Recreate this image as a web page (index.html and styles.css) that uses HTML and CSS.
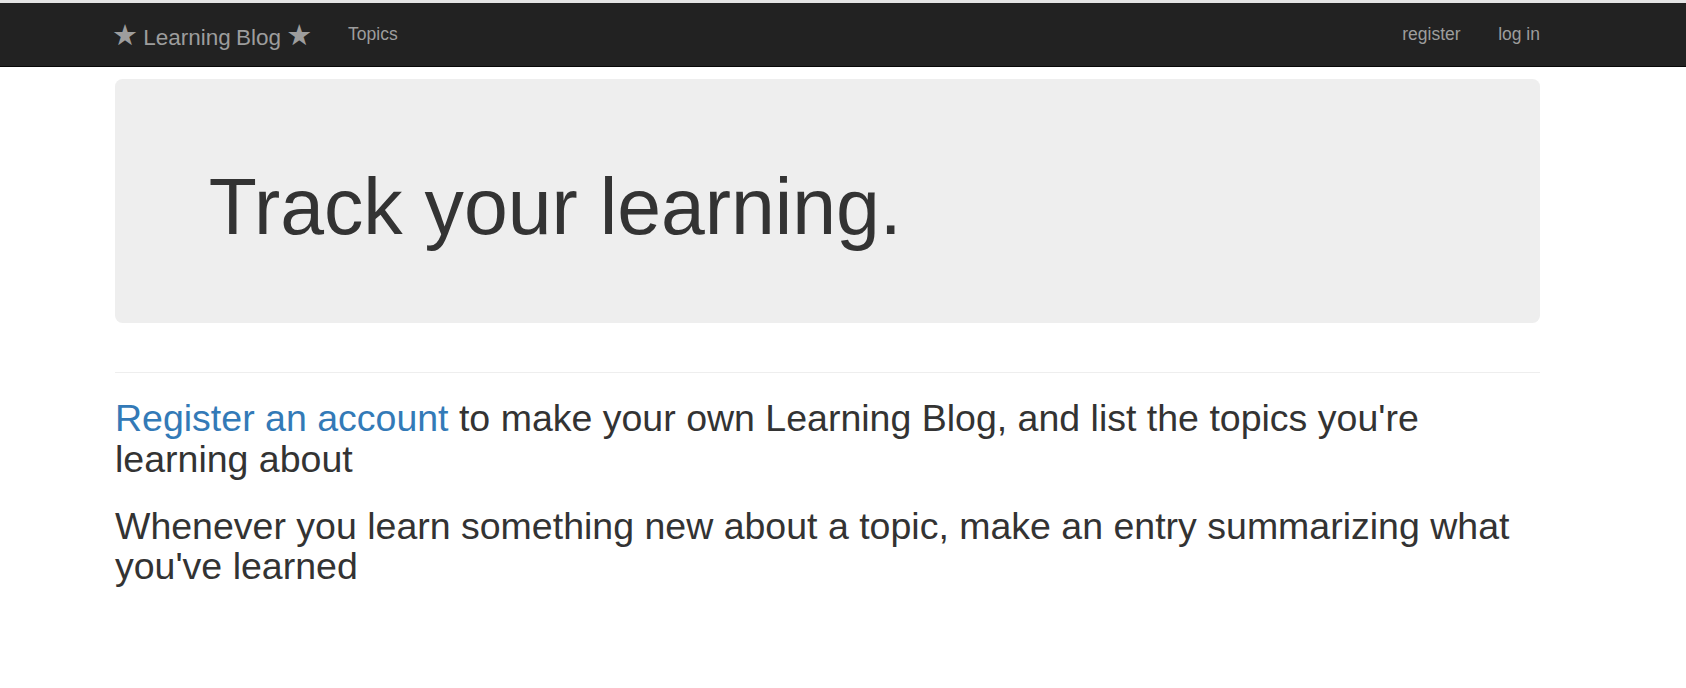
FILE: index.html
```html
<!DOCTYPE html>
<html lang="en">
<head>
<meta charset="utf-8">
<title>Learning Blog</title>
<link rel="stylesheet" href="styles.css">
</head>
<body>
<div class="topstrip"></div>
<nav class="navbar">
  <div class="container nav-inner">
    <a class="brand" href="#"><span class="star">★</span> Learning Blog <span class="star">★</span></a>
    <ul class="nav nav-left">
      <li><a href="#">Topics</a></li>
    </ul>
    <ul class="nav nav-right">
      <li><a href="#">register</a></li>
      <li><a href="#">log in</a></li>
    </ul>
  </div>
</nav>
<main class="container">
  <div class="jumbotron">
    <h1>Track your learning.</h1>
  </div>
  <hr class="divider">
  <p class="intro"><a href="#">Register an account</a> to make your own Learning Blog, and list the topics you're learning about</p>
  <p class="intro">Whenever you learn something new about a topic, make an entry summarizing what you've learned</p>
</main>
</body>
</html>
```
FILE: styles.css
```css
html, body {
  margin: 0;
  padding: 0;
  background: #fff;
  font-family: "Liberation Sans", Arial, Helvetica, sans-serif;
  color: #333;
}

.topstrip {
  height: 3px;
  background: #e4e4e4;
}

.navbar {
  background: #222;
  border-bottom: 1px solid #080808;
  height: 63px;
}

.container {
  margin-left: 115px;
  width: 1425px;
}

.nav-inner {
  display: flex;
  align-items: flex-start;
  height: 63px;
}

.brand {
  display: block;
  color: #9d9d9d;
  text-decoration: none;
  font-size: 22.5px;
  line-height: 25px;
  padding: 21.7px 17px 0 0;
  margin-left: -3px;
  white-space: pre;
  word-spacing: -1px;
}

.star {
  font-family: "DejaVu Sans", sans-serif;
  font-size: 29px;
  line-height: 0;
}

.nav {
  list-style: none;
  margin: 0;
  padding: 0;
  display: flex;
}

.nav a {
  display: block;
  color: #9d9d9d;
  text-decoration: none;
  font-size: 17.5px;
  line-height: 25px;
  padding: 18.75px;
}

.nav-right {
  margin-left: auto;
  margin-right: -18.75px;
}

.jumbotron {
  margin-top: 12px;
  background: #eee;
  border-radius: 7.5px;
  padding: 60px 93.75px;
}

.jumbotron h1 {
  margin: 25px 0 12.5px;
  font-size: 78.75px;
  line-height: 1.1;
  font-weight: normal;
  color: #333;
}

.divider {
  margin: 49px 0 25px;
  border: 0;
  border-top: 1px solid #eee;
}

.intro {
  margin: 0 0 26.75px;
  font-size: 37.5px;
  line-height: 40.5px;
  color: #333;
}

.intro a {
  color: #337ab7;
  text-decoration: none;
}
```
